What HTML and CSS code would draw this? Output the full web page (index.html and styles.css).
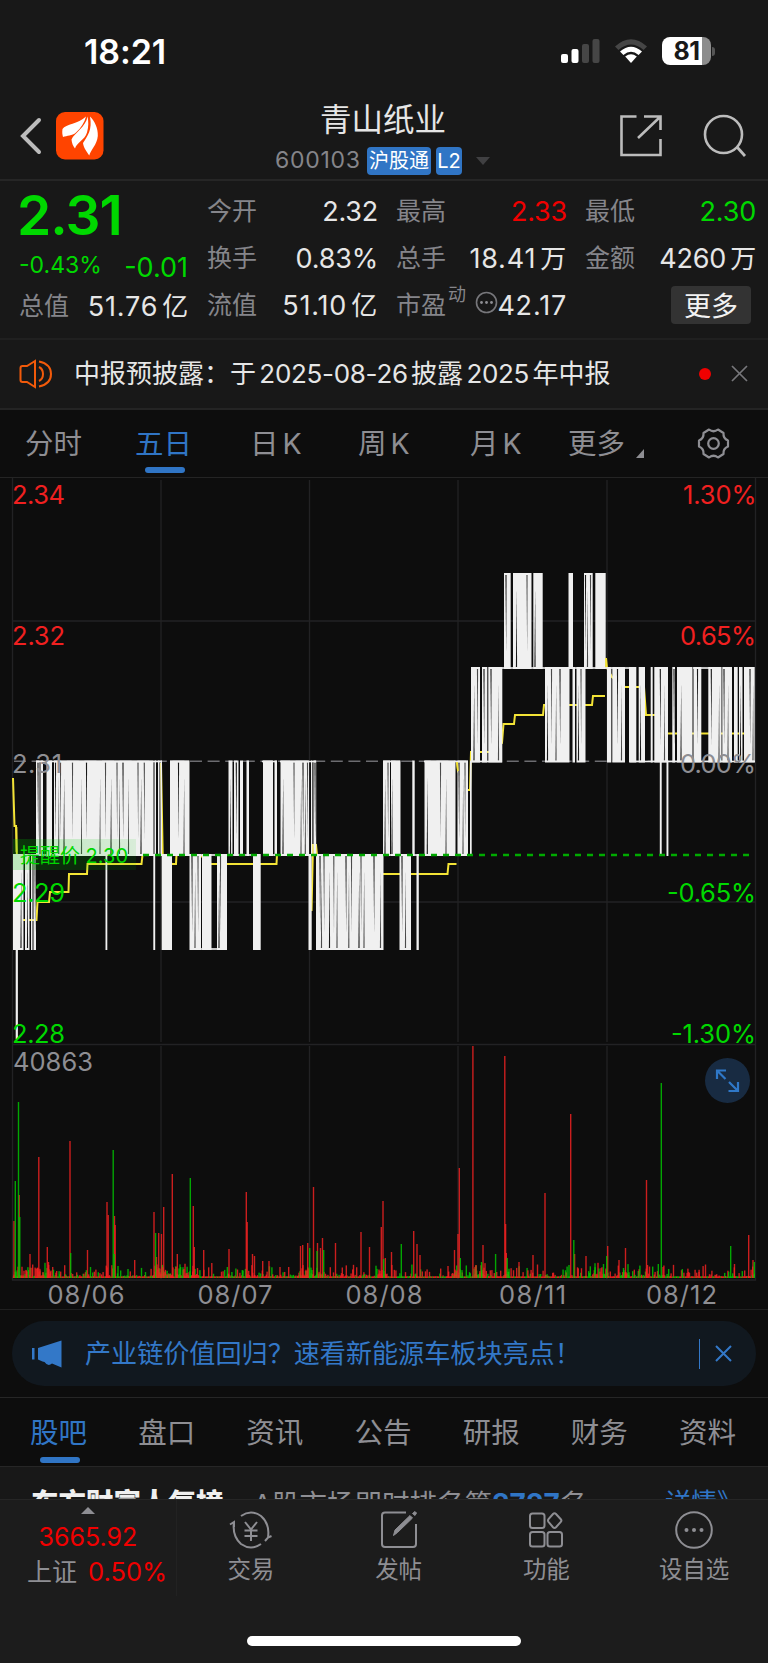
FILE: index.html
```html
<!DOCTYPE html>
<html lang="zh-CN">
<head>
  <meta charset="UTF-8">
  <meta name="viewport" content="width=device-width, initial-scale=1.0">
  <title>青山纸业 600103</title>
  <link rel="stylesheet" href="styles.css">
</head>
<body>
  <div class="status">
    <span class="time">18:21</span>
    <svg class="signal" width="40" height="26" viewBox="0 0 40 26">
      <rect x="1" y="16" width="7" height="9" rx="2" fill="#fff"/>
      <rect x="11.500" y="11" width="7" height="14" rx="2" fill="#fff"/>
      <rect x="22" y="6" width="7" height="19" rx="2" fill="#464646"/>
      <rect x="32.500" y="1" width="7" height="24" rx="2" fill="#464646"/>
    </svg>
    <svg class="wifi" width="34" height="26" viewBox="0 0 34 26">
      <path d="M1 8.500Q17 -6 33 8.500L29.500 12Q17 1 4.500 12Z" fill="#464646"/>
      <path d="M6 13.500Q17 3.800 28 13.500L24.600 17Q17 10.500 9.400 17Z" fill="#fff"/>
      <path d="M11.200 18.600Q17 13.800 22.800 18.600L17 25Z" fill="#fff"/>
    </svg>
    <div class="battery"><span>81</span></div>
    <i class="nub"></i>
  </div>

  <header class="header">
    <svg class="back" width="24" height="38" viewBox="0 0 24 38"><path d="M20 3L4 19L20 35" fill="none" stroke="#bcbcbc" stroke-width="4" stroke-linecap="round"/></svg>
    <svg class="logo" width="48" height="48" viewBox="0 0 48 48">
      <rect width="47.500" height="47.500" rx="9" fill="#ff4400"/>
      <path d="M30 4.500C22 12 10 12 6.500 17C6 20 6.300 22.500 7 25C11 23.500 16 24 20 20.500C25 16 28.500 10.500 30 4.500Z" fill="#fff"/>
      <path d="M31.500 4.500C30 15 18 21 15.500 27.500C15.800 31 17 34 19 36.500C21 30 28.500 28.500 31 20.500C32.800 14.500 32.500 9 31.500 4.500Z" fill="#fff"/>
      <path d="M34 4.500C36.500 18 31.500 24 27 31C27.500 36 31 40 33.300 43.500C34.500 38 41 33 41.800 24C42.200 16 38.500 9 34 4.500Z" fill="#fff"/>
    </svg>
    <div class="title">
      <h1>青山纸业</h1>
      <div class="code">
        <span class="num">600103</span>
        <span class="tag">沪股通</span>
        <span class="tag tag-l2">L2</span>
        <i class="down"></i>
      </div>
    </div>
    <svg class="share" width="44" height="44" viewBox="0 0 44 44"><path d="M17.500 2.500H2.500V41H41.500V25M25 2.500H41.500V16M41 3L19 24" fill="none" stroke="#bcbcbc" stroke-width="2.600"/></svg>
    <svg class="search" width="44" height="44" viewBox="0 0 44 44"><path d="M34 33L42 42" stroke="#bcbcbc" stroke-width="2.800"/><circle cx="20.500" cy="20.500" r="18.500" fill="none" stroke="#bcbcbc" stroke-width="2.600"/></svg>
  </header>

  <section class="quote">
    <div class="price">
      <div class="last green">2.31</div>
      <div class="change green"><span>-0.43%</span><span class="diff">-0.01</span></div>
      <div class="cell"><label>总值</label><b class="wide">51.76<em>亿</em></b></div>
    </div>
    <div class="stats">
      <div class="cell"><label>今开</label><b>2.32</b></div>
      <div class="cell"><label>最高</label><b class="red">2.33</b></div>
      <div class="cell"><label>最低</label><b class="green">2.30</b></div>
      <div class="cell"><label>换手</label><b>0.83%</b></div>
      <div class="cell"><label>总手</label><b class="wide">18.41<em>万</em></b></div>
      <div class="cell"><label>金额</label><b>4260<em>万</em></b></div>
      <div class="cell"><label>流值</label><b class="wide">51.10<em>亿</em></b></div>
      <div class="cell">
        <label>市盈</label><sup>动</sup>
        <svg class="dots" width="23" height="23" viewBox="0 0 23 23"><circle cx="11.500" cy="11.500" r="10" fill="none" stroke="#77777b" stroke-width="1.600"/><g fill="#8e8e93"><circle cx="6.500" cy="11.500" r="1.400"/><circle cx="11.500" cy="11.500" r="1.400"/><circle cx="16.500" cy="11.500" r="1.400"/></g></svg>
        <b class="wide">42.17</b>
      </div>
      <div class="cell"><button class="more">更多</button></div>
    </div>
  </section>

  <section class="notice">
    <svg width="34" height="30" viewBox="0 0 34 30" fill="none" stroke="#f25a0a" stroke-width="2"><path d="M16 2L8 7H3.500Q1.500 7 1.500 9V21Q1.500 23 3.500 23H8L16 28ZM20 8Q24 10 24 15Q24 20 20 22M20 2.500Q32 5 32 15Q32 25 20 27.500"/></svg>
    <p>中报预披露：于 <span>2025-08-26</span> 披露 <span>2025</span> 年中报</p>
    <i class="dot"></i>
    <svg class="close" width="17" height="17" viewBox="0 0 17 17"><path d="M1 1L16 16M16 1L1 16" stroke="#77777b" stroke-width="1.700"/></svg>
  </section>

  <nav class="tabs">
    <a>分时</a>
    <a class="active">五日</a>
    <a>日<span>K</span></a>
    <a>周<span>K</span></a>
    <a>月<span>K</span></a>
    <a class="tab-more">更多<i></i></a>
    <svg width="33" height="33" viewBox="0 0 33 33" fill="none" stroke="#8e8e93" stroke-width="2.200" stroke-linejoin="round"><path d="M12 2.500Q16.500 6 21 2.500L26.500 6Q26 11.500 31 13.500V19.500Q26 21.500 26.500 27L21 30.500Q16.500 27 12 30.500L6.500 27Q7 21.500 2 19.500V13.500Q7 11.500 6.500 6Z"/><circle cx="16.500" cy="16.500" r="5.300"/></svg>
  </nav>

  <section class="chart">
    <svg id="chart" width="768" height="831" viewBox="0 478 768 831">
      <defs>
        <linearGradient id="alertBg"><stop offset="0" stop-color="#00c800" stop-opacity="0.22"/><stop offset="1" stop-color="#00c800" stop-opacity="0.1"/></linearGradient>
      </defs>
      <g fill="none" stroke="#222224" stroke-width="1.300">
        <path d="M12.500 478V1280H755.500V478M12 621H755M12 902H755M12 1044.500H755M161 480V1042M309.500 480V1042M458 480V1042M607 480V1042M161 1046V1279M309.500 1046V1279M458 1046V1279M607 1046V1279"/>
      </g>
      <path d="M14 761.300H755" stroke="#6c6c70" stroke-width="1.600" stroke-dasharray="12 5.600"/>
      <g id="average" fill="none" stroke="#f3e336" stroke-width="2"></g>
      <g id="prices" fill="#f0f0f0"></g>
      <g id="volume"></g>
      <rect x="13" y="839" width="123" height="31" fill="url(#alertBg)"/>
      <path d="M143 855H755" stroke="#00aa00" stroke-width="2.400" stroke-dasharray="6 6"/>
      <g class="axis">
        <text class="up" x="12" y="504" textLength="53">2.34</text>
        <text class="up" x="12" y="645" textLength="53">2.32</text>
        <text x="12" y="773" textLength="50">2.31</text>
        <text class="dn" x="12" y="901.500" textLength="53">2.29</text>
        <text class="dn" x="12" y="1043" textLength="53">2.28</text>
        <text x="13" y="1071" textLength="80">40863</text>
        <text class="up" x="683" y="504" textLength="73.500">1.30%</text>
        <text class="up" x="680" y="645" textLength="76">0.65%</text>
        <text x="680" y="773" textLength="76">0.00%</text>
        <text class="dn" x="667" y="901.500" textLength="89">-0.65%</text>
        <text class="dn" x="671" y="1043" textLength="85">-1.30%</text>
        <text x="47.500" y="1304" textLength="77">08/06</text>
        <text x="197.500" y="1304" textLength="75">08/07</text>
        <text x="345.500" y="1304" textLength="77">08/08</text>
        <text x="499" y="1304" textLength="67">08/11</text>
        <text x="646" y="1304" textLength="71">08/12</text>
      </g>
      <text class="alert" x="20" y="863" textLength="108">提醒价 2.30</text>
      <circle cx="727.500" cy="1080.500" r="22.500" fill="#182b42"/>
      <path d="M717 1079V1070.500H726M717.500 1071L725.500 1079M738 1082V1091H728.500M737.500 1090.500L729 1082" fill="none" stroke="#2f78c8" stroke-width="2.200"/>
    </svg>
  </section>

  <section class="promo">
    <div class="pill">
      <svg width="32" height="28" viewBox="0 0 32 28" fill="#3378c8"><path d="M1 8H3.500V19.500H1ZM7 8L30.500 0.500V27.500L21 23.500Q17 27 13.500 22L11.500 21.500L7 19.500Z"/></svg>
      <p>产业链价值回归？速看新能源车板块亮点！</p>
      <i></i>
      <svg class="close" width="17" height="17" viewBox="0 0 17 17"><path d="M1 1L16 16M16 1L1 16" stroke="#3378c8" stroke-width="2"/></svg>
    </div>
  </section>

  <nav class="subtabs">
    <a class="active">股吧</a>
    <a>盘口</a>
    <a>资讯</a>
    <a>公告</a>
    <a>研报</a>
    <a>财务</a>
    <a>资料</a>
  </nav>

  <section class="rank">
    <strong>东方财富人气榜</strong>
    <p>A股市场即时排名第<b>2727</b>名</p>
    <a>详情》</a>
  </section>

  <footer class="bottom">
    <div class="index">
      <i></i>
      <div class="red">3665.92</div>
      <p>上证 <span class="red">0.50%</span></p>
    </div>
    <a>
      <svg width="44" height="40" viewBox="0 0 44 40" fill="none" stroke="#8e8e93" stroke-width="2"><path d="M12 6Q22 -1 32 6Q41 14 39 27M36 31L39 27.500L42.500 26M32 34Q22 41 12 34Q3 26 5 12M1 14.500L5 12V17M16 12L22 19.500L28 12M22 19.500V31M15.500 20.500H28.500M15.500 26H28.500"/></svg>
      交易
    </a>
    <a>
      <svg width="40" height="40" viewBox="0 0 40 40" fill="none" stroke="#8e8e93" stroke-width="2"><path d="M27 2.500H6Q3 2.500 3 5.500V34Q3 37 6 37H34Q37 37 37 34V14"/><path d="M14.500 25.500L16 20L31 5.500L33.500 8L18.500 22.500ZM33.500 3.500L36 1.500L37.500 3L36 5.500Z" fill="#8e8e93" stroke-width="1"/></svg>
      发帖
    </a>
    <a>
      <svg width="40" height="40" viewBox="0 0 40 40" fill="none" stroke="#8e8e93" stroke-width="2"><rect x="4" y="3.500" width="14.500" height="14.500" rx="2.500"/><rect x="4" y="22" width="14.500" height="14.500" rx="2.500"/><rect x="21.500" y="22" width="14.500" height="14.500" rx="2.500"/><path d="M27 4L22.500 9.200Q21.500 10.500 22.500 11.800L27 17.200Q28.500 18.700 30 17.200L34.800 11.800Q36 10.500 34.800 9.200L30 4Q28.500 2.500 27 4Z"/></svg>
      功能
    </a>
    <a>
      <svg width="40" height="40" viewBox="0 0 40 40" fill="#8e8e93"><circle cx="20" cy="20" r="17.800" fill="none" stroke="#8e8e93" stroke-width="2"/><circle cx="12.500" cy="20" r="2"/><circle cx="20" cy="20" r="2"/><circle cx="27.500" cy="20" r="2"/></svg>
      设自选
    </a>
  </footer>
  <div class="homebar"><i></i></div>

  <script src="chart.js"></script>
</body>
</html>
```
FILE: styles.css
```css
body {
  margin: 0;
  width: 768px;
  height: 1663px;
  overflow: hidden;
  background: #0d0d0d;
  color: #e6e6e6;
  font-family: Inter, "Noto Sans CJK SC", sans-serif;
  line-height: 1;
}
h1, p {
  margin: 0;
  font-weight: 400;
}
.red {
  color: #f00000;
}
.green {
  color: #00d800;
}

/* status bar */
.status {
  display: flex;
  align-items: center;
  box-sizing: border-box;
  height: 102px;
  padding: 0 53px 0 84px;
  background: #181818;
}
.time {
  flex: 1;
  padding-top: 1px;
  color: #fff;
  font-size: 34px;
  font-weight: 600;
  letter-spacing: -0.1px;
}
.wifi {
  margin: 0 14px;
}
.battery {
  width: 49px;
  height: 28px;
  border-radius: 8px;
  background: linear-gradient(90deg, #fff 81%, #8c8c8c 81%);
  color: #181818;
  font-size: 25px;
  font-weight: 700;
  line-height: 28px;
  text-align: center;
  letter-spacing: -0.5px;
}
.nub {
  width: 3px;
  height: 9px;
  margin-left: 1px;
  border-radius: 0 4px 4px 0;
  background: #555;
}

/* header */
.header {
  display: flex;
  align-items: center;
  box-sizing: border-box;
  height: 79px;
  padding: 0 21px 9px 19px;
  border-bottom: 2px solid #262626;
  background: #181818;
}
.logo {
  margin-left: 13px;
}
.title {
  flex: 1;
  padding: 2px 0 0 171px;
}
.title h1 {
  width: 128px;
  margin-left: 45px;
  font-size: 31.500px;
  line-height: 40px;
  white-space: nowrap;
}
.code {
  display: flex;
  align-items: center;
  height: 28px;
  margin-top: 7px;
}
.num {
  width: 92px;
  color: #85858a;
  font-size: 23px;
  letter-spacing: 0.7px;
}
.tag {
  width: 64px;
  height: 28px;
  margin-right: 5px;
  border-radius: 4px;
  background: #3075c5;
  color: #fff;
  font-size: 20px;
  line-height: 28px;
  text-align: center;
}
.tag-l2 {
  width: 26px;
}
.down {
  margin-left: 9px;
  border: 7px solid transparent;
  border-top: 8px solid #404042;
  border-bottom: 0;
}
.share {
  margin-right: -1px;
}
.search {
  margin-left: 41px;
}

/* quote */
.quote {
  display: flex;
  box-sizing: border-box;
  height: 159px;
  padding: 7px 14px 0 19px;
  border-bottom: 2px solid #202020;
  background: #181818;
}
.price {
  width: 169px;
  margin-right: 20px;
}
.last {
  height: 60px;
  margin-left: -2px;
  font-size: 55px;
  font-weight: 600;
  line-height: 55px;
  letter-spacing: -1px;
}
.change {
  display: flex;
  justify-content: space-between;
  align-items: center;
  height: 35px;
  margin-right: -1px;
  font-size: 23px;
}
.diff {
  padding-top: 4px;
  font-size: 27px;
}
.price .cell {
  height: 46px;
}
.stats {
  display: grid;
  flex: 1;
  grid-template-columns: 169px 169px 169px;
  grid-auto-rows: 47px;
  column-gap: 20px;
}
.cell {
  display: flex;
  align-items: center;
  height: 47px;
}
.cell label {
  color: #85858a;
  font-size: 25px;
}
.cell b {
  margin-left: auto;
  margin-right: -2px;
  font-size: 27px;
  font-weight: 400;
  letter-spacing: -0.200px;
  white-space: nowrap;
}
.cell .wide {
  letter-spacing: 0.800px;
}
.cell em {
  margin-left: 4px;
  font-style: normal;
  font-size: 26px;
}
.cell sup {
  margin: -22px 0 0 2px;
  color: #85858a;
  font-size: 18px;
}
.dots {
  margin: -6px -1px 0 auto;
}
.cell .dots + b {
  margin-left: 0;
}
.more {
  width: 80px;
  height: 38px;
  margin: -2px 3px 0 auto;
  padding: 0;
  border: 0;
  border-radius: 4px;
  background: #333;
  color: #f2f2f2;
  font: 27px/34px "Noto Sans CJK SC", sans-serif;
}

/* notice */
.notice {
  display: flex;
  align-items: center;
  box-sizing: border-box;
  height: 70px;
  padding: 0 20px 1px 19px;
  border-bottom: 2px solid #242424;
  background: #181818;
}
.notice p {
  flex: 1;
  margin-left: 21px;
  font-size: 26px;
  white-space: nowrap;
  word-spacing: -4px;
}
.notice p span {
  letter-spacing: -0.300px;
}
.dot {
  width: 12px;
  height: 12px;
  margin-right: 20px;
  border-radius: 50%;
  background: #f00000;
}

/* period tabs */
.tabs {
  display: flex;
  align-items: center;
  box-sizing: border-box;
  height: 68px;
  padding: 0 38px 0 25px;
  border-bottom: 1px solid #242424;
  color: #8e8e93;
  font-size: 28.500px;
}
.tabs a {
  position: relative;
  width: 110px;
  padding-top: 1px;
  white-space: nowrap;
}
.tabs a:nth-child(2) {
  width: 115px;
}
.tabs a:nth-child(3) {
  width: 108px;
}
.tabs a:nth-child(4) {
  width: 112px;
}
.tabs a:nth-child(5) {
  width: 98px;
}
.tabs span {
  margin-left: 4px;
}
.tabs .tab-more {
  width: 129px;
}
.tab-more i {
  display: inline-block;
  margin: 0 0 -4px 11px;
  border-left: 8px solid transparent;
  border-bottom: 9px solid #8e8e93;
}
.tabs .active, .subtabs .active {
  color: #3075c5;
}
.active::after {
  content: "";
  position: absolute;
  left: 10px;
  top: 38px;
  width: 40px;
  height: 6px;
  border-radius: 3px;
  background: #3075c5;
}

/* chart */
.chart {
  height: 831px;
  border-bottom: 1px solid #202020;
}
.chart svg {
  display: block;
}
.axis {
  fill: #8e8e93;
  font-size: 25.500px;
}
.axis .up {
  fill: #f02020;
}
.axis .dn {
  fill: #00d800;
}
.alert {
  fill: #00d800;
  font-size: 20px;
}

/* promo */
.promo {
  box-sizing: border-box;
  height: 88px;
  padding: 11px 12px 0;
  border-bottom: 1px solid #262626;
}
.pill {
  display: flex;
  align-items: center;
  box-sizing: border-box;
  height: 65px;
  padding: 0 24px 0 19px;
  border-radius: 33px;
  background: #11181f;
  color: #3378c8;
}
.pill p {
  flex: 1;
  margin-left: 22px;
  padding-top: 1px;
  font-size: 26.100px;
}
.pill i {
  width: 1px;
  height: 30px;
  margin-right: 15px;
  background: #3378c8;
}

/* sub tabs */
.subtabs {
  display: flex;
  align-items: center;
  justify-content: space-between;
  box-sizing: border-box;
  height: 69px;
  padding: 3px 32px 0 30px;
  border-bottom: 1px solid #262626;
  color: #8e8e93;
  font-size: 28.500px;
}
.subtabs a {
  position: relative;
}

/* popularity rank, cut by the bottom bar */
.rank {
  display: flex;
  align-items: flex-start;
  box-sizing: border-box;
  height: 32px;
  padding: 23px 25px 0 31px;
  overflow: hidden;
  background: #181818;
  color: #8e8e93;
  font-size: 27.500px;
  white-space: nowrap;
}
.rank strong {
  width: 222px;
  color: #f0f0f0;
  font-size: 27.500px;
  font-style: oblique 8deg;
  font-weight: 900;
}
.rank p {
  flex: 1;
}
.rank b, .rank a {
  color: #3075c5;
}
.rank b {
  font-size: 28px;
}
.rank a {
  font-size: 26px;
}

/* bottom bar */
.bottom {
  display: flex;
  box-sizing: border-box;
  height: 137px;
  border-top: 1px solid #262626;
  background: #1c1c1c;
  color: #8e8e93;
}
.bottom a {
  display: flex;
  flex: 1;
  flex-direction: column;
  align-items: center;
  padding-top: 10px;
  font-size: 23.500px;
}
.bottom a svg {
  margin-bottom: 8px;
}
.index {
  box-sizing: border-box;
  width: 177px;
  height: 96px;
  padding-top: 7px;
  border-right: 1px solid #222;
  text-align: center;
  font-size: 25px;
  white-space: nowrap;
}
.index i {
  display: block;
  width: 0;
  margin: 0 auto 11px;
  border: 7px solid transparent;
  border-top: 0;
  border-bottom-color: #8e8e93;
}
.index p {
  margin: 9px 0 0 18px;
  word-spacing: 4px;
}
.index p span {
  font-size: 25.500px;
}
.homebar {
  height: 27px;
  background: #1c1c1c;
}
.homebar i {
  display: block;
  width: 274px;
  height: 10px;
  margin: 0 auto;
  border-radius: 5px;
  background: #fff;
}
```
FILE: chart.js
```js
const NS = 'http://www.w3.org/2000/svg'
const P33 = 574, P32 = 668, P31 = 761.500, P30 = 855, P29 = 949

const prices = document.querySelector('#prices')
const volume = document.querySelector('#volume')
const average = document.querySelector('#average')

function add(parent, name, attrs) {
  const el = document.createElementNS(NS, name)
  for (const k in attrs) el.setAttribute(k, attrs[k])
  parent.appendChild(el)
}

// [top, bottom, from, to, ticks without a trade]
const runs = [
  [P30, P29, 13, 23.5, [21]], [P30, P29, 25, 29.5, [27.5]], [P30, P29, 31, 32.5], [P30, P29, 33.5, 36, [35]],
  [P31, P30, 36, 39.5, [38]], [P31, P30, 40.5, 43],
  [P31, P30, 46.5, 52], [P31, P30, 54, 153.5, [55.5, 58.7, 60.5, 64, 72.5, 81.5, 86.5, 100, 105.5, 111, 117, 119.5, 123, 128.5, 138, 141, 144.3]],
  [P31, P30, 154.5, 156], [P31, P30, 158, 159.5], [P31, P30, 160.5, 162],
  [P30, P29, 105.5, 107.3], [P30, P29, 153.3, 155.2], [P30, P29, 161.7, 172],
  [P31, P30, 170, 189.5, [178.5, 184]],
  [P30, P29, 189.5, 201, [192, 195, 198]], [P30, P29, 202, 211.5], [P30, P29, 217, 227, [219, 220.5]],
  [P31, P30, 228.5, 232.5, [230.5]], [P31, P30, 234, 238.5, [236.3]], [P31, P30, 240, 243], [P31, P30, 246.5, 249],
  [P30, P29, 253, 260.7], [P31, P30, 263, 273], [P31, P30, 274.5, 277],
  [P31, P30, 280.5, 309, [283, 294, 301, 303, 305.3, 307.5]],
  [P30, P29, 308.5, 311.7], [P31, P30, 311, 312.3], [P31, P30, 313.5, 316.2, [315]],
  [P30, P29, 316, 383.5, [320, 321.500, 324, 329.5, 333.8, 337, 346, 348.8, 351.5, 359, 361, 364, 374, 380.5]],
  [P31, P30, 383, 390, [385, 388]], [P31, P30, 391, 400.5, [392]], [P31, P30, 412.3, 414.7],
  [P30, P29, 399.5, 411, [402, 405.5]], [P30, P29, 416.5, 418.8],
  [P31, P30, 424.5, 455.5, [427.3, 440.5, 446]], [P31, P30, 457.5, 468, [459, 463, 465]], [P31, P30, 470, 471.7],
  [P32, P31, 471, 480, [474, 477.5]], [P32, P31, 482, 487.3, [484]], [P32, P31, 488.3, 502.3, [491, 498.5]],
  [P33, P32, 504, 510.7, [506]], [P33, P32, 513, 531.5, [516.5, 527]], [P33, P32, 533.3, 542.7, [535]],
  [P32, P31, 545, 569.5, [547.5, 551.5, 556, 560]], [P32, P31, 572.5, 575], [P32, P31, 576.5, 585.5, [578.5, 581]],
  [P33, P32, 568.5, 573], [P33, P32, 584, 592.7, [585.5, 587.5, 590.5]], [P33, P32, 595.3, 605.7],
  [P32, P31, 607, 611.3], [P32, P31, 612.3, 625, [617.5, 621.5]], [P32, P31, 629, 636.3],
  [P32, P31, 638.7, 645, [640.5]], [P32, P31, 650.7, 652.7], [P32, P31, 654.3, 668, [660.3, 664.5]],
  [P32, P31, 672.3, 675, [674]], [P32, P31, 677, 692.5, [681]], [P32, P31, 693.5, 701.3, [697.5]],
  [P32, P31, 708.3, 721.5, [711.3, 719]], [P32, P31, 722.3, 732, [724, 728]], [P32, P31, 734, 737.7],
  [P32, P31, 739, 742.5, [740.5]], [P32, P31, 744, 754.7, [750, 753]],
  [P31, P30, 659.8, 661.7], [P31, P30, 666.5, 668.4],
  [P29, 1038, 15.700, 17.900]
]

for (const [top, bottom, from, to, gaps = []] of runs) {
  add(prices, 'rect', { x: from, y: top - 1, width: to - from, height: bottom - top + 2 })
  gaps.forEach((x, i) => {
    const down = (i + Math.round(from)) % 2
    const wide = down ? bottom - 1 : top + 1
    const thin = down ? top + 14 : bottom - 14
    add(prices, 'path', { d: `M${x - 0.6} ${wide}H${x + 0.6}L${x + 0.2} ${thin}Z`, fill: i % 3 ? '#4a4a4a' : '#181818' })
  })
}

// flat stretches between the runs
const flats = [
  [P31, 36, 162], [P31, 170, 189], [P31, 262, 277], [P31, 280, 316], [P31, 383, 400], [P31, 424, 468],
  [P30, 13, 260], [P30, 263, 471], [P29, 200, 227], [P31, 471, 502],
  [P32, 502, 513], [P32, 528, 543], [P32, 543, 607], [P32, 607, 625], [P32, 625, 636],
  [P31, 630, 708], [P32, 693, 721], [P31, 708, 755]
]
for (const [y, from, to] of flats) {
  add(prices, 'rect', { x: from, y: y - 0.8, width: to - from, height: 1.6 })
}

const averages = [
  'M13 778L14.500 826H16L17 860L22 920H36.500L37.500 902H49L50 892H68.500L69 874H87L87.500 864H141.500L142.500 855H153',
  'M161 763L162.700 855L172 864H176L176.500 855H200L211 864H276.500L277 855H309',
  'M311.500 911L313 845H316L317 855H329L330 864H360L361 874H447.500L448.500 864H456.500',
  'M457 762L458 771L462 780L467 790H470L471 752H490L502 743L503.500 724H514L515 715H543L544 705H592L593 696H605',
  'M606 658L607 668L612 677L625 687H644L646 715H666L667 733.500H745L746 724H754'
]
for (const d of averages) add(average, 'path', { d })
// bright ends that stay over the price line
add(volume, 'path', { d: 'M606 658V667M457 762L458 771M16.500 827V852', stroke: '#f3e336', 'stroke-width': 1.7 })

function bar(x, top, color) {
  add(volume, 'rect', { x: x - 0.7, y: top, width: 1.4, height: 1278 - top, fill: color, opacity: 0.82 })
}

const RED = '#f52222', GREEN = '#00c800'

// small trades along the base line
let seed = 11
function rnd() {
  seed = (seed * 16807) % 2147483647
  return seed / 2147483647
}
for (let x = 13.5; x < 755; x += 0.8) {
  bar(x, 1277.5 - 1 - Math.pow(rnd(), 6) * 12, rnd() > 0.35 ? RED : GREEN)
}
const busy = [[14, 28], [36, 52], [152, 174], [176, 196], [298, 325], [376, 388], [452, 463], [474, 486], [504, 510], [594, 608], [622, 630]]
for (const [from, to] of busy) {
  for (let x = from; x < to; x += 1) bar(x, 1276 - rnd() * rnd() * 16, rnd() > 0.3 ? RED : GREEN)
}

const reds = [
  [14, 1221], [19.2, 1195], [30, 1254], [38.8, 1157], [47.3, 1247], [48.5, 1262], [70, 1141], [87.5, 1250],
  [107, 1202], [108.2, 1215], [114.5, 1216], [115.2, 1225], [134.7, 1260], [154, 1212], [156.5, 1257], [158.7, 1233],
  [161.5, 1234], [163.7, 1207], [172.3, 1174], [177.3, 1254], [193.3, 1206], [194.3, 1247], [203.7, 1250], [211.8, 1263],
  [229, 1249], [246.3, 1192], [247.2, 1222], [252.5, 1254], [254.5, 1256], [262.7, 1261], [269, 1261], [280, 1267],
  [300.5, 1246], [302.7, 1245], [307.7, 1243], [313.5, 1187], [317.5, 1243], [320.5, 1248], [322.5, 1238], [335.5, 1243],
  [361, 1232], [369.5, 1247], [381.3, 1227], [383, 1201], [385.3, 1258], [391.5, 1252], [413.7, 1231], [417, 1244],
  [420, 1255], [448, 1266], [454.5, 1250], [458, 1234], [459.3, 1168], [472.9, 1046], [476, 1265], [483, 1245],
  [504.8, 1056], [505.6, 1224], [506.3, 1253], [519, 1262], [533, 1255], [545, 1193], [570.7, 1114], [574.6, 1254],
  [586, 1256], [607.7, 1246], [619, 1260], [625.5, 1248], [646.5, 1180], [647.5, 1265], [663, 1267], [699, 1272],
  [734.5, 1264], [748.7, 1235], [753, 1260]
]
const greens = [
  [15.3, 1181], [18.5, 1102], [19.8, 1217], [70.7, 1253], [90.5, 1267], [113.2, 1150], [114.2, 1254], [118, 1266],
  [128, 1269], [155.6, 1233], [190.3, 1178], [227.3, 1267], [309.7, 1248], [317, 1251], [323.7, 1250], [383.7, 1259],
  [401.3, 1244], [460.3, 1258], [481.5, 1262], [495.6, 1254], [507.2, 1258], [569, 1265], [573.8, 1240], [603.5, 1264],
  [606.7, 1256], [623.5, 1268], [658.3, 1264], [661.3, 1083], [668.7, 1269], [730.7, 1246], [754.3, 1262]
]
reds.forEach(([x, y]) => bar(x, y, RED))
greens.forEach(([x, y]) => bar(x, y, GREEN))
```
